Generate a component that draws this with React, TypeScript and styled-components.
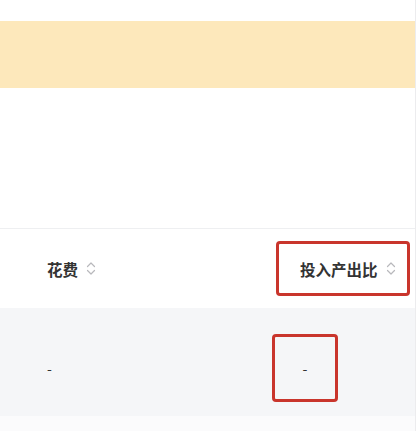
import React from "react";
import styled, { createGlobalStyle } from "styled-components";

const Global = createGlobalStyle`
  html, body { margin: 0; padding: 0; background: #ffffff; }
  body { font-family: "Noto Sans CJK SC", "Noto Sans", sans-serif; }
`;

const Page = styled.div`
  width: 415px;
  height: 431px;
  border-right: 1px solid #ececee;
  display: flex;
  flex-direction: column;
  background: #fbfbfc;
`;

const TopSpace = styled.div`
  height: 21px;
  background: #ffffff;
`;

const Notice = styled.div`
  height: 67px;
  background: #fde8bb;
`;

const Blank = styled.div`
  height: 140px;
  background: #ffffff;
`;

const Row = styled.div<{ $head?: boolean }>`
  display: grid;
  grid-template-columns: 272px 1fr;
  height: ${(p) => (p.$head ? "80px" : "108px")};
  background: ${(p) => (p.$head ? "#ffffff" : "#f5f6f8")};
  border-top: ${(p) => (p.$head ? "1px solid #eeeff1" : "none")};
  align-items: ${(p) => (p.$head ? "center" : "start")};
  box-sizing: border-box;
  padding-top: ${(p) => (p.$head ? "0" : "26px")};
`;

const Cell = styled.div<{ $first?: boolean }>`
  display: flex;
  align-items: center;
  padding-left: ${(p) => (p.$first ? "47px" : "0")};
  font-size: 15px;
  color: #333333;
`;

const HeadLabel = styled.span`
  display: inline-flex;
  align-items: center;
  gap: 8px;
  font-weight: 700;
  font-size: 15.5px;
  color: #333;
`;

const Mark = styled.div<{ $w: number; $h: number; $pl: number; $ml: number; $center?: boolean }>`
  box-sizing: border-box;
  width: ${(p) => p.$w}px;
  height: ${(p) => p.$h}px;
  margin-left: ${(p) => p.$ml}px;
  padding-left: ${(p) => p.$pl}px;
  border: 3px solid #c9352c;
  border-radius: 4px;
  display: flex;
  align-items: center;
  justify-content: ${(p) => (p.$center ? "center" : "flex-start")};
`;

const Dash = styled.span`
  font-size: 14px;
  color: #333;
  line-height: 20px;
`;

const DashCell = styled.div`
  height: 68px;
  display: flex;
  align-items: center;
`;

const SortIcon = () => (
  <svg width="10" height="17" viewBox="0 0 10 17" fill="none">
    <path d="M1.5 6.5 L5 3 L8.5 6.5" stroke="#b8b8bc" strokeWidth="1.2" strokeLinecap="round" strokeLinejoin="round" />
    <path d="M1.5 10.5 L5 14 L8.5 10.5" stroke="#b8b8bc" strokeWidth="1.2" strokeLinecap="round" strokeLinejoin="round" />
  </svg>
);

export default function App() {
  return (
    <>
      <Global />
      <Page>
        <TopSpace />
        <Notice />
        <Blank />
        <Row $head>
          <Cell $first>
            <HeadLabel>
              花费
              <SortIcon />
            </HeadLabel>
          </Cell>
          <Cell>
            <Mark $w={134} $h={55} $pl={21} $ml={4}>
              <HeadLabel>
                投入产出比
                <SortIcon />
              </HeadLabel>
            </Mark>
          </Cell>
        </Row>
        <Row>
          <Cell $first>
            <DashCell>
              <Dash>-</Dash>
            </DashCell>
          </Cell>
          <Cell>
            <Mark $w={66} $h={68} $pl={0} $ml={0} $center>
              <Dash>-</Dash>
            </Mark>
          </Cell>
        </Row>
      </Page>
    </>
  );
}
